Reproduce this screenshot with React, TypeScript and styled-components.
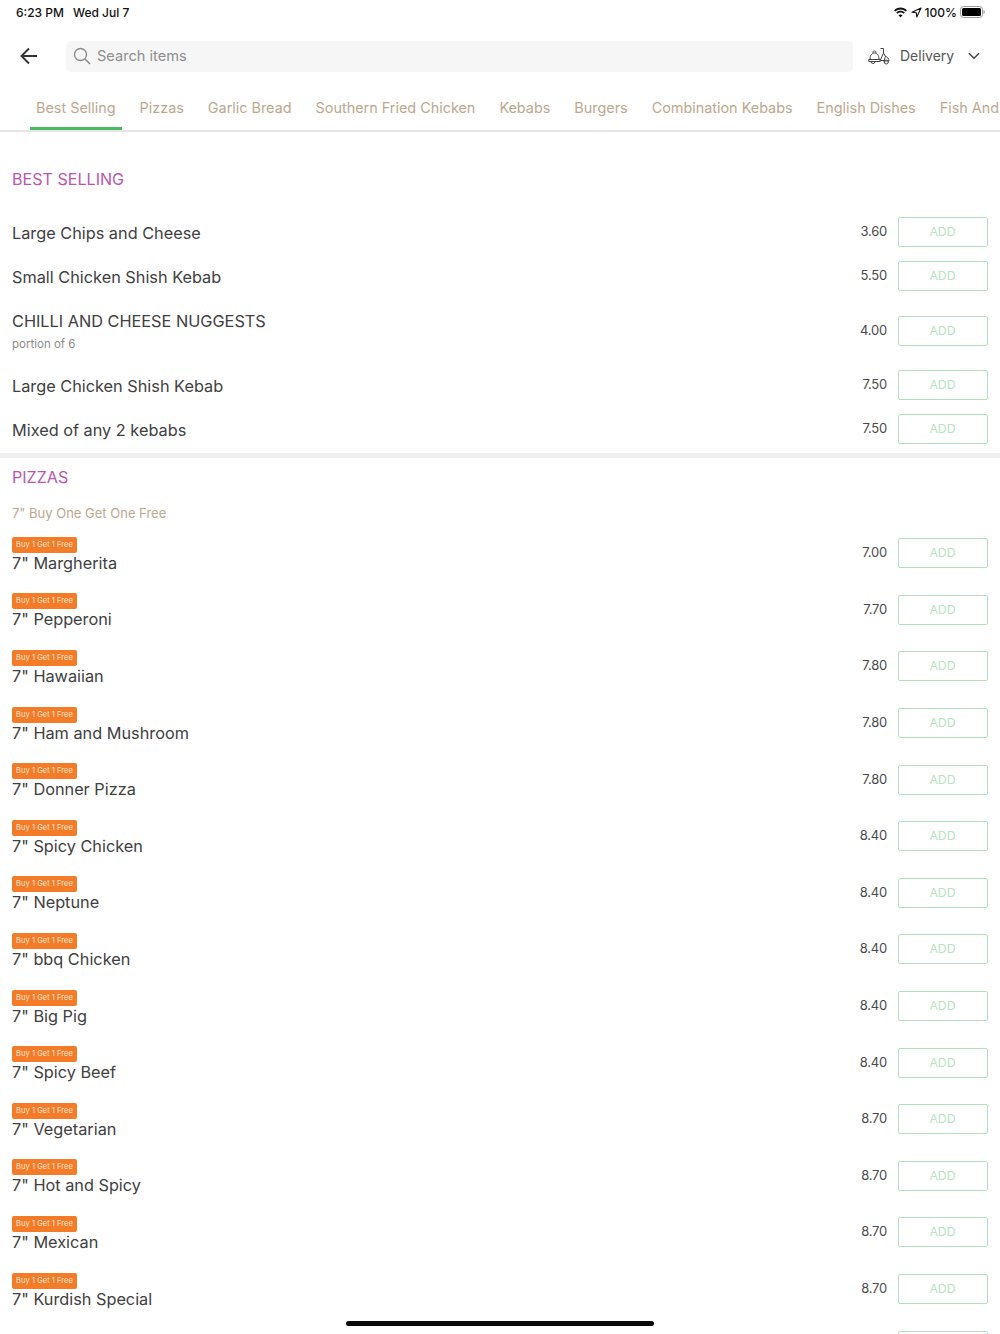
import React from "react";
import styled, { createGlobalStyle } from "styled-components";

const Global = createGlobalStyle`
  html, body { margin: 0; padding: 0; background: #fff; }
  * { box-sizing: border-box; }
`;
const FONT = `"Inter", "Open Sans", "Liberation Sans", sans-serif`;

const Page = styled.div`
  position: relative;
  width: 1000px;
  height: 1334px;
  overflow: hidden;
  background: #fff;
  font-family: ${FONT};
  color: #404040;
`;
const StatusBar = styled.div`
  height: 24px;
  padding: 0 16px;
  display: flex;
  align-items: center;
  justify-content: space-between;
  font-size: 12px;
  font-weight: 500;
  color: #111;
`;
const StatusLeft = styled.div`
  display: flex;
  gap: 9px;
`;
const StatusRight = styled.div`
  display: flex;
  align-items: center;
  gap: 3px;
  margin-right: -1px;
`;
const Header = styled.div`
  height: 64px;
  padding: 0 16px 0 20px;
  display: flex;
  align-items: center;
`;
const BackButton = styled.div`
  width: 46px;
  height: 24px;
  display: flex;
  align-items: center;
`;
const SearchBox = styled.div`
  width: 787px;
  height: 31px;
  border-radius: 5px;
  background: #f6f6f6;
  display: flex;
  align-items: center;
  gap: 6px;
  padding: 0 7px;
  color: #8e8e8e;
  font-size: 14.6px;
`;
const DeliveryBox = styled.div`
  display: flex;
  align-items: center;
  margin-left: 15px;
  color: #555;
  font-size: 14px;
  line-height: 18px;
`;
const DeliveryLabel = styled.span`
  margin: -1px 14px 0 10px;
`;
const Tabs = styled.div`
  height: 44px;
  display: flex;
  padding-left: 24px;
  border-bottom: 2px solid #e6e6e6;
  white-space: nowrap;
  overflow: hidden;
`;
const Tab = styled.div<{ $active?: boolean }>`
  height: 42px;
  flex: none;
  padding: 10px 6px 0;
  margin: 0 6px;
  font-size: 14.4px;
  line-height: 20px;
  color: #bba98f;
  border-bottom: 3px solid ${(p) => (p.$active ? "#4cb963" : "transparent")};
`;
const Section = styled.section<{ $first?: boolean }>`
  padding: ${(p) => (p.$first ? "36px" : "8px")} 12px ${(p) => (p.$first ? "2px" : "0")};
  border-bottom: ${(p) => (p.$first ? "5px solid #efefef" : "none")};
`;
const SectionTitle = styled.h2`
  margin: 0;
  height: 22px;
  line-height: 22px;
  font-size: 16.1px;
  font-weight: 400;
  color: #bb57ac;
`;
const SectionNote = styled.div`
  margin-top: 14px;
  height: 23px;
  line-height: 22px;
  font-size: 13px;
  color: #bba98f;
`;
const BestList = styled.div`
  margin-top: 20px;
`;
const Row = styled.div<{ $tall?: boolean }>`
  height: ${(p) => (p.$tall ? "65px" : "44px")};
  display: flex;
  align-items: center;
  justify-content: space-between;
`;
const PromoRow = styled.div`
  height: 56.6px;
  display: flex;
  align-items: center;
  justify-content: space-between;
`;
const ItemInfo = styled.div`
  min-width: 0;
  margin-top: 1px;
`;
const PromoInfo = styled.div`
  min-width: 0;
  margin-top: 4px;
`;
const ItemName = styled.div`
  font-size: 16.3px;
  line-height: 22px;
  color: #404040;
`;
const ItemSub = styled.div`
  margin-top: 3px;
  font-size: 11.5px;
  line-height: 18px;
  color: #8d8d8d;
`;
const Badge = styled.div`
  width: 65px;
  height: 16px;
  line-height: 16px;
  border-radius: 2px;
  background: #f47b27;
  color: #fbe5d3;
  font-size: 7.6px;
  text-align: center;
  margin-bottom: -1px;
`;
const Buy = styled.div`
  display: flex;
  align-items: center;
  gap: 11px;
`;
const Price = styled.div`
  font-size: 13px;
  letter-spacing: -0.2px;
  color: #4a4a4a;
  margin-top: -2px;
`;
const AddButton = styled.div`
  width: 90px;
  height: 30px;
  line-height: 28px;
  border: 1px solid #b2e2bd;
  border-radius: 2px;
  padding-right: 1px;
  text-align: center;
  font-size: 12.3px;
  color: #b9e2c3;
`;
const HomeIndicator = styled.div`
  position: absolute;
  left: 346px;
  bottom: 8px;
  width: 308px;
  height: 5px;
  border-radius: 3px;
  background: #0a0a0a;
`;

const Wifi = () => (
  <svg width="15" height="11" viewBox="0 0 15 11" fill="#111">
    <path d="M7.5 2.4c2 0 3.8.8 5.2 2.1l1.2-1.3C12.2 1.600 10 .6 7.500.6S2.800 1.600 1.100 3.200l1.200 1.300C3.700 3.200 5.500 2.400 7.500 2.400z" />
    <path d="M7.500 5.500c1.200 0 2.300.5 3.100 1.200l1.200-1.300C10.700 4.300 9.200 3.700 7.500 3.700s-3.200.6-4.300 1.700l1.200 1.300c.8-.7 1.900-1.200 3.100-1.200z" />
    <path d="M7.500 10.500l2-2.200c-.5-.5-1.200-.8-2-.8s-1.500.3-2 .8z" />
  </svg>
);
const Locate = () => (
  <svg width="11" height="11" viewBox="0 0 11 11" fill="none" stroke="#111" strokeWidth="1.100">
    <path d="M10 1L1 5.200l4.300.5.500 4.300z" strokeLinejoin="round" />
  </svg>
);
const Battery = () => (
  <svg width="25" height="12" viewBox="0 0 25 12">
    <rect x="0.500" y="0.500" width="22" height="11" rx="3" fill="none" stroke="#999" />
    <rect x="2" y="2" width="19" height="8" rx="1.500" fill="#000" />
    <path d="M23.500 4v4c.8-.3 1.300-1.100 1.300-2s-.5-1.700-1.300-2z" fill="#999" />
  </svg>
);
const BackArrow = () => (
  <svg width="18" height="18" viewBox="0 0 18 18" fill="none" stroke="#333" strokeWidth="1.900">
    <path d="M17 9H1.500M9 1.500L1.500 9 9 16.500" />
  </svg>
);
const SearchIcon = () => (
  <svg width="18" height="18" viewBox="0 0 18 18" fill="none" stroke="#8a8a8a" strokeWidth="1.300">
    <circle cx="7.500" cy="7.500" r="6" />
    <path d="M12 12l5 5" strokeWidth="1.600" />
  </svg>
);
const Scooter = () => (
  <svg width="22" height="18" viewBox="0 0 22 18" fill="none" stroke="#444" strokeWidth="1">
    <path d="M2 12c0-3.600 2-6 4.500-6S11 8.400 11 12" />
    <path d="M5 6c-.6-2.800 3.600-2.800 3 0" />
    <path d="M.8 12.500h11.400v2H.8z" />
    <path d="M3 14.500a2 2 0 0 0 4 0" />
    <path d="M12.200 13.500h4.300c-.2-2.500 1-3 .9-4.300L15.500 6V1.500h-3" />
    <path d="M15.500 6l-3.300 7.500" />
    <path d="M17.400 9.200c2 .8 3.600 2.500 3.600 4.800h-6" />
    <circle cx="18.300" cy="15" r="2" />
  </svg>
);
const Chevron = () => (
  <svg width="12" height="8" viewBox="0 0 12 8" fill="none" stroke="#444" strokeWidth="1.500">
    <path d="M1 1.200l5 5 5-5" />
  </svg>
);

const tabs = ["Best Selling", "Pizzas", "Garlic Bread", "Southern Fried Chicken", "Kebabs", "Burgers", "Combination Kebabs", "English Dishes", "Fish And"];
const best: { name: string; price: string; sub?: string }[] = [
  { name: "Large Chips and Cheese", price: "3.60" },
  { name: "Small Chicken Shish Kebab", price: "5.50" },
  { name: "CHILLI AND CHEESE NUGGESTS", price: "4.00", sub: "portion of 6" },
  { name: "Large Chicken Shish Kebab", price: "7.50" },
  { name: "Mixed of any 2 kebabs", price: "7.50" },
];
const pizzas: [string, string][] = [
  ['7" Margherita', "7.00"],
  ['7" Pepperoni', "7.70"],
  ['7" Hawaiian', "7.80"],
  ['7" Ham and Mushroom', "7.80"],
  ['7" Donner Pizza', "7.80"],
  ['7" Spicy Chicken', "8.40"],
  ['7" Neptune', "8.40"],
  ['7" bbq Chicken', "8.40"],
  ['7" Big Pig', "8.40"],
  ['7" Spicy Beef', "8.40"],
  ['7" Vegetarian', "8.70"],
  ['7" Hot and Spicy', "8.70"],
  ['7" Mexican', "8.70"],
  ['7" Kurdish Special', "8.70"],
];

export default function App() {
  return (
    <Page>
      <Global />
      <StatusBar>
        <StatusLeft>
          <span>6:23 PM</span>
          <span>Wed Jul 7</span>
        </StatusLeft>
        <StatusRight>
          <Wifi />
          <Locate />
          <span>100%</span>
          <Battery />
        </StatusRight>
      </StatusBar>
      <Header>
        <BackButton>
          <BackArrow />
        </BackButton>
        <SearchBox>
          <SearchIcon />
          <span>Search items</span>
        </SearchBox>
        <DeliveryBox>
          <Scooter />
          <DeliveryLabel>Delivery</DeliveryLabel>
          <Chevron />
        </DeliveryBox>
      </Header>
      <Tabs>
        {tabs.map((t, i) => (
          <Tab key={t} $active={i === 0}>
            {t}
          </Tab>
        ))}
      </Tabs>
      <Section $first>
        <SectionTitle>BEST SELLING</SectionTitle>
        <BestList>
          {best.map((b) => (
            <Row key={b.name} $tall={!!b.sub}>
              <ItemInfo>
                <ItemName>{b.name}</ItemName>
                {b.sub && <ItemSub>{b.sub}</ItemSub>}
              </ItemInfo>
              <Buy>
                <Price>{b.price}</Price>
                <AddButton>ADD</AddButton>
              </Buy>
            </Row>
          ))}
        </BestList>
      </Section>
      <Section>
        <SectionTitle>PIZZAS</SectionTitle>
        <SectionNote>7" Buy One Get One Free</SectionNote>
        {pizzas.map(([name, price]) => (
          <PromoRow key={name}>
            <PromoInfo>
              <Badge>Buy 1 Get 1 Free</Badge>
              <ItemName>{name}</ItemName>
            </PromoInfo>
            <Buy>
              <Price>{price}</Price>
              <AddButton>ADD</AddButton>
            </Buy>
          </PromoRow>
        ))}
        <PromoRow>
          <PromoInfo>
            <Badge />
          </PromoInfo>
          <Buy>
            <AddButton />
          </Buy>
        </PromoRow>
      </Section>
      <HomeIndicator />
    </Page>
  );
}
